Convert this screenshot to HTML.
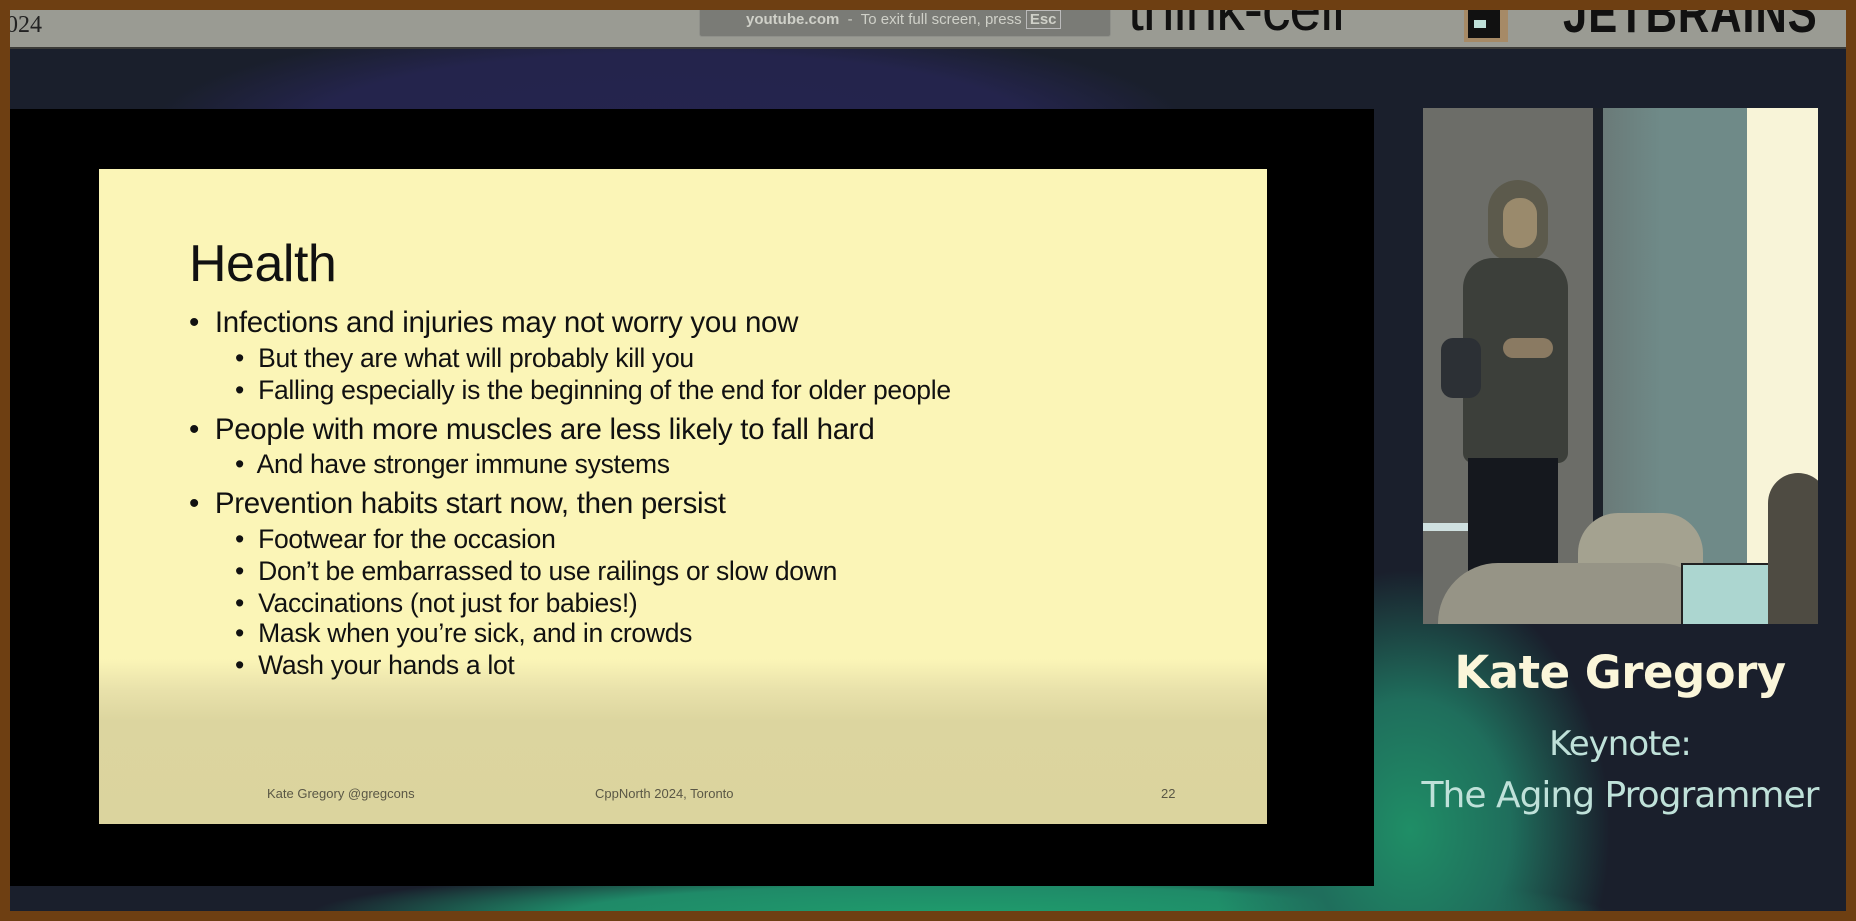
<!DOCTYPE html>
<html><head><meta charset="utf-8"><style>
*{margin:0;padding:0;box-sizing:border-box}
body{width:1856px;height:921px;overflow:hidden;background:#6e3f12;position:relative;font-family:"Liberation Sans",sans-serif}
.abs{position:absolute}
.l1{position:absolute;left:189px;font-size:29.5px;white-space:nowrap;letter-spacing:-.3px;color:#111}
.l2{position:absolute;left:235px;font-size:26.5px;white-space:nowrap;letter-spacing:-.3px;color:#111}
.ft{position:absolute;top:786px;font-size:13px;color:#5a5745;white-space:nowrap}
#bg{left:10px;top:10px;width:1836px;height:901px;overflow:hidden;
background:
radial-gradient(ellipse 200px 260px at 1400px 820px,#1f8e66 0%,#1f6e5c 50%,rgba(31,90,90,0) 100%),
radial-gradient(ellipse 650px 50px at 950px 905px,#1f9c6c 0%,#1f8a68 60%,rgba(30,100,90,0) 100%),
radial-gradient(ellipse 520px 110px at 660px 120px,#25244e 0%,#24244c 70%,rgba(36,36,76,0) 100%),
#1a1f2c}
#topbar{left:10px;top:10px;width:1836px;height:39px;background:#9a9b93;border-bottom:2px solid #3b3b38;overflow:hidden}
</style></head><body>
<div id="bg" class="abs"></div>
<div id="topbar" class="abs">
  <div class="abs" style="left:-4px;top:2px;font-family:'Liberation Serif',serif;font-size:24px;color:#222">024</div>
  <div class="abs" style="left:689px;top:-4px;width:412px;height:31px;background:#7a7b76;border:1px solid #8f908a;border-radius:3px;color:#cfd0c8;font-size:15px;line-height:26px;padding-left:46px"><b>youtube.com</b> &nbsp;-&nbsp; To exit full screen, press <span style="border:1px solid #bbb;padding:0 3px;font-weight:bold">Esc</span></div>
  <div class="abs" style="left:1118px;top:-36px;font-size:62px;color:#111;letter-spacing:-1px;transform:scaleX(.92);transform-origin:left">think-cell</div>
  <div class="abs" style="left:1454px;top:-6px;width:44px;height:38px;background:#a68a66"></div>
  <div class="abs" style="left:1458px;top:-6px;width:32px;height:34px;background:#111"></div>
  <div class="abs" style="left:1464px;top:10px;width:12px;height:8px;background:#bfe0d8"></div>
  <div class="abs" style="left:1553px;top:-30px;font-size:56px;font-weight:bold;color:#111;letter-spacing:1px;transform:scaleX(.78);transform-origin:left">JETBRAINS</div>
</div>
<div class="abs" style="left:10px;top:109px;width:1364px;height:777px;background:#000"></div>
<div class="abs" style="left:99px;top:169px;width:1168px;height:655px;background:linear-gradient(#fbf5b7 0,#fbf5b7 490px,#e9e2ab 520px,#dcd59f 552px,#dbd49e 100%)"></div>
<div class="abs" style="left:189px;top:234px;font-size:52px;color:#111;letter-spacing:-.5px">Health</div>
<div class="l1" style="top:306px">•&nbsp; Infections and injuries may not worry you now</div>
<div class="l2" style="top:343px">•&nbsp; But they are what will probably kill you</div>
<div class="l2" style="top:375px">•&nbsp; Falling especially is the beginning of the end for older people</div>
<div class="l1" style="top:413px">•&nbsp; People with more muscles are less likely to fall hard</div>
<div class="l2" style="top:449px">•&nbsp; And have stronger immune systems</div>
<div class="l1" style="top:487px">•&nbsp; Prevention habits start now, then persist</div>
<div class="l2" style="top:524px">•&nbsp; Footwear for the occasion</div>
<div class="l2" style="top:556px">•&nbsp; Don’t be embarrassed to use railings or slow down</div>
<div class="l2" style="top:588px">•&nbsp; Vaccinations (not just for babies!)</div>
<div class="l2" style="top:618px">•&nbsp; Mask when you’re sick, and in crowds</div>
<div class="l2" style="top:650px">•&nbsp; Wash your hands a lot</div>
<div class="ft" style="left:267px">Kate Gregory @gregcons</div>
<div class="ft" style="left:595px">CppNorth 2024, Toronto</div>
<div class="ft" style="left:1161px">22</div>
<div class="abs" style="left:1423px;top:108px;width:395px;height:516px;overflow:hidden;background:#6c6d68">
  <div class="abs" style="left:170px;top:0;width:10px;height:516px;background:#1c2129"></div>
  <div class="abs" style="left:180px;top:0;width:145px;height:516px;background:linear-gradient(90deg,#6a7a78,#6f8a88 40%,#6f8a88)"></div>
  <div class="abs" style="left:324px;top:0;width:71px;height:516px;background:#f8f4d8"></div>
  <div class="abs" style="left:65px;top:72px;width:60px;height:80px;border-radius:30px 30px 20px 20px;background:#5c5a4c"></div>
  <div class="abs" style="left:80px;top:90px;width:34px;height:50px;border-radius:16px;background:#9a8a6c"></div>
  <div class="abs" style="left:40px;top:150px;width:105px;height:205px;border-radius:30px 30px 10px 10px;background:#3c3f3a"></div>
  <div class="abs" style="left:18px;top:230px;width:40px;height:60px;border-radius:12px;background:#2c3035"></div>
  <div class="abs" style="left:80px;top:230px;width:50px;height:20px;border-radius:10px;background:#8a7a62"></div>
  <div class="abs" style="left:45px;top:350px;width:90px;height:130px;background:#15181e"></div>
  <div class="abs" style="left:155px;top:405px;width:125px;height:80px;border-radius:40px 40px 0 0;background:#a4a290"></div>
  <div class="abs" style="left:15px;top:455px;width:280px;height:80px;border-radius:60px 60px 0 0;background:#969486"></div>
  <div class="abs" style="left:258px;top:455px;width:100px;height:70px;background:#acd6d0;border:2px solid #222"></div>
  <div class="abs" style="left:345px;top:365px;width:60px;height:160px;border-radius:30px 30px 0 0;background:#4e4b42"></div>
  <div class="abs" style="left:0;top:415px;width:45px;height:8px;background:#cfe0e0"></div>
</div>
<div class="abs" style="left:1380px;top:646px;width:480px;text-align:center;font-size:45px;font-weight:bold;color:#fbf6da;font-family:'DejaVu Sans',sans-serif;letter-spacing:-.5px">Kate Gregory</div>
<div class="abs" style="left:1380px;top:724px;width:480px;text-align:center;font-size:34px;color:#bfe1d9;font-family:'DejaVu Sans',sans-serif;letter-spacing:-1px">Keynote:</div>
<div class="abs" style="left:1370px;top:775px;width:500px;text-align:center;font-size:36px;color:#bfe1d9;font-family:'DejaVu Sans',sans-serif;letter-spacing:-1px">The Aging Programmer</div>
</body></html>
